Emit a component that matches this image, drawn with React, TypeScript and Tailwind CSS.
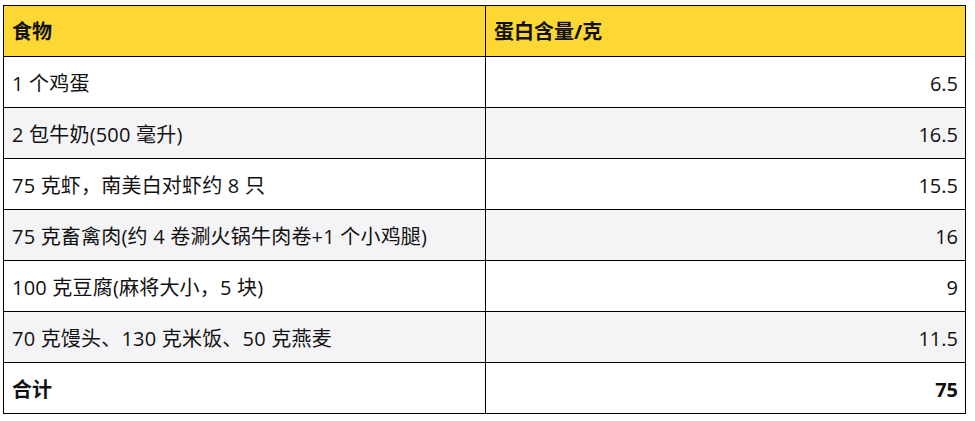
const rows: { food: string; protein: string }[] = [
    { food: '1 个鸡蛋', protein: '6.5' },
    { food: '2 包牛奶(500 毫升)', protein: '16.5' },
    { food: '75 克虾，南美白对虾约 8 只', protein: '15.5' },
    { food: '75 克畜禽肉(约 4 卷涮火锅牛肉卷+1 个小鸡腿)', protein: '16' },
    { food: '100 克豆腐(麻将大小，5 块)', protein: '9' },
    { food: '70 克馒头、130 克米饭、50 克燕麦', protein: '11.5' },
];

export default function App() {
    return (
        <div
            className="h-[421px] w-[975px] bg-white pt-[5px] pl-[3px] text-[#111]"
            style={{ fontFamily: '"Open Sans", "Noto Sans CJK SC", sans-serif' }}
        >
            <table className="w-[963px] table-fixed border-collapse border border-black text-[20px]">
                <colgroup>
                    <col className="w-[482px]" />
                    <col />
                </colgroup>
                <thead>
                    <tr className="h-[51px] bg-[#fdd734]">
                        <th className="border border-black pt-[2px] pl-[8px] text-left font-bold">
                            食物
                        </th>
                        <th className="border border-black pt-[2px] pl-[8px] text-left font-bold">
                            蛋白含量/克
                        </th>
                    </tr>
                </thead>
                <tbody>
                    {rows.map((row, i) => (
                        <tr
                            key={i}
                            className={`h-[51px] ${i % 2 === 1 ? 'bg-[#f4f4f6]' : 'bg-white'}`}
                        >
                            <td className="border border-black pt-[3px] pl-[8px] tracking-[0.2px]">
                                {row.food}
                            </td>
                            <td className="border border-black pt-[3px] pr-[7px] text-right">
                                {row.protein}
                            </td>
                        </tr>
                    ))}
                    {/* total */}
                    <tr className="h-[51px] bg-white font-bold">
                        <td className="border border-black pt-[3px] pl-[8px]">合计</td>
                        <td className="border border-black pt-[3px] pr-[7px] text-right">
                            75
                        </td>
                    </tr>
                </tbody>
            </table>
        </div>
    );
}
